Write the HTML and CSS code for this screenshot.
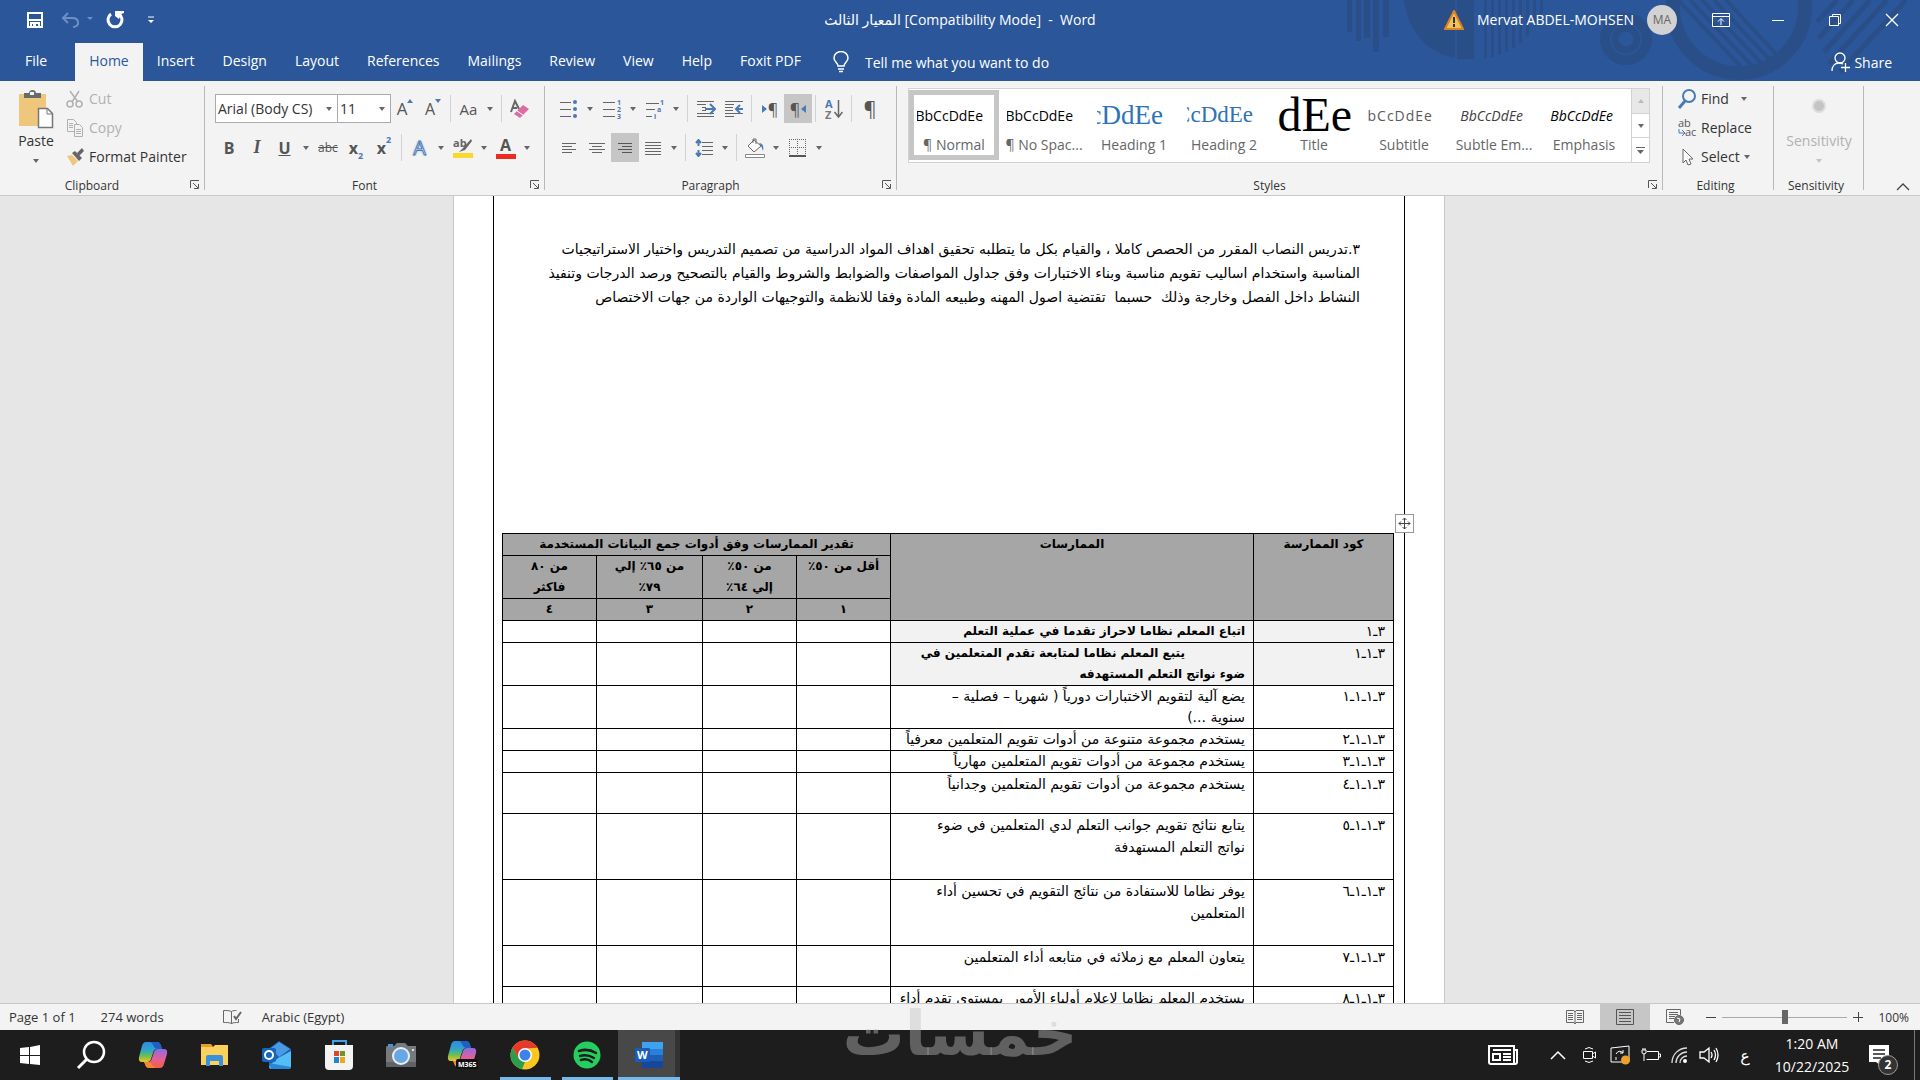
FILE: index.html
```html
<!DOCTYPE html>
<html lang="en">
<head>
  <meta charset="UTF-8" />
  <meta name="viewport" content="width=device-width, initial-scale=1.0"/>
  <title>المعيار الثالث [Compatibility Mode] - Word</title>
  <link rel="stylesheet" href="styles.css">
</head>
<body>

<header class="top">
  <svg class="top-art" width="580" height="81" viewBox="0 0 580 81" aria-hidden="true">
    <g fill="#2a4f88">
      <path d="M7 0h5v32h-5zM16 0h5v41h-5zM24 0h6v38h-6zM33 0h6v52h-6zM43 0h6v37h-6z"/>
      <path d="M64 0h51v58C85 52 68 30 64 0z"/>
      <path d="M117 0h17v59h-17zM144 0h3v58h-3zM151 0h3v57h-3zM158 0h3v55h-3zM165 0h3v52h-3zM172 0h3v48h-3zM179 0h3v43h-3zM186 0h3v36h-3zM193 0h3v26h-3zM200 0h3v14h-3z"/>
    </g>
    <g fill="none" stroke="#2a4f88">
      <circle cx="286" cy="39" r="21" stroke-width="10"/>
      <circle cx="286" cy="39" r="11" stroke-width="7"/>
      <circle cx="399" cy="7" r="66" stroke-width="14"/>
      <path stroke-width="4" d="M338 0l66 70M350 0l64 68M362 0l60 64M374 0l56 60M386 0l50 54"/>
      <path stroke-width="5" d="M497 0l-20 22M513 0l-34 38M530 0l-46 52M547 0l-58 64M566 0l-66 72"/>
    </g>
  </svg>
  <div class="titlebar">
    <div class="quick">
      <button class="q-save" aria-label="Save"><svg width="18" height="18" viewBox="0 0 18 18"><path d="M2 2h14v14H2z" fill="none" stroke="#fff" stroke-width="2"/><path d="M2 9h14M5 16v-4h8v4" fill="none" stroke="#fff" stroke-width="2"/><path d="M7 13h3v3H7z" fill="#fff"/></svg></button>
      <button class="q-undo" aria-label="Undo"><svg width="32" height="18" viewBox="0 0 32 18"><path d="M7 2L2 7l5 5M2 7h9c8 0 8 9 1 9" fill="none" stroke="#6d8fc4" stroke-width="2"/><path d="M26 6h6l-3 3z" fill="#6d8fc4"/></svg></button>
      <button class="q-redo" aria-label="Repeat"><svg width="20" height="20" viewBox="0 0 20 20"><path d="M6 4a7 7 0 1 0 8 0" fill="none" stroke="#fff" stroke-width="3"/><path d="M10 1h9v2l-3 1-2 5-4-3z" fill="#fff"/></svg></button>
      <button class="q-more" aria-label="Customize"><svg width="8" height="8" viewBox="0 0 8 8"><path d="M1 1h6" stroke="#fff"/><path d="M1 4h6L4 7z" fill="#fff"/></svg></button>
    </div>
    <h1 class="doc-title">المعيار الثالث [Compatibility Mode]&nbsp; -&nbsp; Word</h1>
    <div class="account">
      <svg width="20" height="20" viewBox="0 0 20 20"><path d="M10 1l9 18H1z" fill="#f3c15c" stroke="#d98324" stroke-width="2"/><path d="M10 7v6M10 14v3" stroke="#333" stroke-width="2"/></svg>
      <span>Mervat ABDEL-MOHSEN</span>
      <span class="avatar">MA</span>
    </div>
    <div class="window-buttons">
      <button aria-label="Ribbon display options"><svg width="18" height="14" viewBox="0 0 18 14" fill="none" stroke="#fff"><path d="M.5.5h17v13H.5zM.5 3.500h17M9 12V6M6 8.500l3-3 3 3"/></svg></button>
      <button aria-label="Minimize"><svg width="14" height="14" viewBox="0 0 14 14"><path d="M1 7.500h12" stroke="#fff"/></svg></button>
      <button aria-label="Restore"><svg width="14" height="14" viewBox="0 0 14 14" fill="none" stroke="#fff"><path d="M1.500 3.500h9v9h-9zM4.500 3V1.500h8v9H11"/></svg></button>
      <button aria-label="Close"><svg width="14" height="14" viewBox="0 0 14 14"><path d="M1 1l12 12M13 1L1 13" stroke="#fff" stroke-width="1.300"/></svg></button>
    </div>
  </div>
  <nav class="tabs">
    <a class="tab file" href="#file">File</a>
    <a class="tab active" href="#home">Home</a>
    <a class="tab" href="#insert">Insert</a>
    <a class="tab" href="#design">Design</a>
    <a class="tab" href="#layout">Layout</a>
    <a class="tab" href="#references">References</a>
    <a class="tab" href="#mailings">Mailings</a>
    <a class="tab" href="#review">Review</a>
    <a class="tab" href="#view">View</a>
    <a class="tab" href="#help">Help</a>
    <a class="tab" href="#foxit">Foxit PDF</a>
    <button class="tell">
      <svg width="16" height="22" viewBox="0 0 16 22" fill="none" stroke="#fff" stroke-width="1.500"><path d="M5 15c0-3-4-4-4-8a7 6.500 0 0 1 14 0c0 4-4 5-4 8zM5 18h6M6 20.500h4"/></svg>
      <span>Tell me what you want to do</span>
    </button>
    <button class="share">
      <svg width="20" height="20" viewBox="0 0 20 20" fill="none" stroke="#fff" stroke-width="1.300"><circle cx="9" cy="6" r="5"/><path d="M1 19c0-5 3-8 7-8 2 0 3 .5 4 1M10 15.500h9M14.500 11v9"/></svg>
      <span>Share</span>
    </button>
  </nav>
</header>

<div class="ribbon">
  <section class="group clipboard">
    <div class="group-body">
      <button class="big paste">
        <svg width="36" height="40" viewBox="0 0 36 40"><path d="M1 5h27v32H1z" fill="#efc77c"/><path d="M6 9V4h5c0-4 7-4 7 0h5v5z" fill="#6a6a6a"/><path d="M12 3h4v3h-4z" fill="#f3f3f3"/><path d="M20.500 19.500h9l5 5v14h-14z" fill="#fff" stroke="#777" stroke-width="1.500"/><path d="M29 20v5h5" fill="none" stroke="#777"/></svg>
        <span>Paste</span>
        <i class="arrow"></i>
      </button>
      <div class="side">
        <button class="line off"><svg width="18" height="18" viewBox="0 0 18 18" fill="none" stroke="#b0b0b0" stroke-width="1.500"><path d="M4 1l8 11M13 1L6 12"/><circle cx="4" cy="14" r="3"/><circle cx="13" cy="14" r="3"/></svg>Cut</button>
        <button class="line off"><svg width="18" height="18" viewBox="0 0 18 18" fill="#f3f3f3" stroke="#b0b0b0"><path d="M1.500.5h6l3 3v9h-9zM3 4.500h4M3 6.500h4M3 8.500h4"/><path d="M8.500 5.500h5l3 3v9h-8zM10 10.500h5M10 12.500h5M10 14.500h5"/></svg>Copy</button>
        <button class="line"><svg width="18" height="18" viewBox="0 0 18 18"><path d="M1 8l5-1 6 6-5 5z" fill="#efc77c"/><path d="M6 5l3-2 7 7-3 3z" fill="#666"/><path d="M11 5l5-5 2 3-5 5z" fill="#666"/></svg>Format Painter</button>
      </div>
    </div>
    <div class="group-label"><span>Clipboard</span><button class="launch" aria-label="Clipboard options"><svg width="10" height="10" viewBox="0 0 10 10" fill="none" stroke="#555"><path d="M.5 8V.5H9M3 3l5 5M8.500 4v4.500H4"/></svg></button></div>
  </section>

  <section class="group font">
    <div class="group-body rows">
      <div class="row">
        <label class="combo name"><select aria-label="Font"><option>Arial (Body CS)</option></select><i class="arrow"></i></label>
        <label class="combo size"><select aria-label="Font size"><option>11</option></select><i class="arrow"></i></label>
        <button class="tool letter">A<svg class="mark" width="6" height="4"><path d="M0 4l3-4 3 4z" fill="#4a7ab5"/></svg></button>
        <button class="tool letter small">A<svg class="mark" width="6" height="4"><path d="M0 0h6L3 4z" fill="#4a7ab5"/></svg></button>
        <i class="sep"></i>
        <button class="tool drop grey"><span>Aa</span><i class="arrow"></i></button>
        <i class="sep"></i>
        <button class="tool" aria-label="Clear formatting"><svg width="20" height="20" viewBox="0 0 20 20"><path d="M1 13L5 2l4 8M2 9h5" fill="none" stroke="#666" stroke-width="2"/><path d="M4 15l9-9 6 4-9 9z" fill="#de6ba4"/><path d="M7 12l6 4" stroke="#fff"/></svg></button>
      </div>
      <div class="row">
        <button class="tool bold">B</button>
        <button class="tool italic">I</button>
        <button class="tool drop bold"><span class="under">U</span><i class="arrow"></i></button>
        <button class="tool strike">abc</button>
        <button class="tool bold">x<sub>2</sub></button>
        <button class="tool bold">x<sup>2</sup></button>
        <i class="sep"></i>
        <button class="tool drop effect"><span>A</span><i class="arrow"></i></button>
        <button class="tool drop" aria-label="Highlight"><svg width="20" height="22" viewBox="0 0 20 22"><text x="0" y="10" class="ab">ab</text><path d="M18 2l-7 8-5 5 6-2 7-9z" fill="#666"/><path d="M0 16h20v5H0z" fill="#fbd72b"/></svg><i class="arrow"></i></button>
        <button class="tool drop fontcolor"><span>A</span><i class="arrow"></i></button>
      </div>
    </div>
    <div class="group-label"><span>Font</span><button class="launch" aria-label="Font options"><svg width="10" height="10" viewBox="0 0 10 10" fill="none" stroke="#555"><path d="M.5 8V.5H9M3 3l5 5M8.500 4v4.500H4"/></svg></button></div>
  </section>

  <section class="group paragraph">
    <div class="group-body rows">
      <div class="row">
        <button class="tool drop" aria-label="Bullets"><svg width="18" height="20" viewBox="0 0 18 20"><path d="M0 3.500h11M0 10.500h11M0 17.500h11" stroke="#666"/><g fill="#4a7ab5"><circle cx="15" cy="3" r="2"/><circle cx="15" cy="10" r="2"/><circle cx="15" cy="17" r="2"/></g></svg><i class="arrow"></i></button>
        <button class="tool drop" aria-label="Numbering"><svg width="18" height="20" viewBox="0 0 18 20"><path d="M0 3.500h12M0 10.500h12M0 17.500h12" stroke="#666"/><g class="num"><text x="14" y="6">1</text><text x="14" y="13">2</text><text x="14" y="20">3</text></g></svg><i class="arrow"></i></button>
        <button class="tool drop" aria-label="Multilevel list"><svg width="18" height="20" viewBox="0 0 18 20"><path d="M0 4.500h13M0 10.500h9M0 17.500h6" stroke="#666"/><g class="num"><text x="14" y="6">1</text><text x="11" y="13">a</text><text x="8" y="20">i</text></g></svg><i class="arrow"></i></button>
        <i class="sep"></i>
        <button class="tool" aria-label="Decrease indent"><svg width="19" height="18" viewBox="0 0 19 18"><path d="M0 1.500h17M0 4.500h9M5 7.500h4M5 10.500h4M0 13.500h17M0 16.500h17" stroke="#666"/><path d="M8 9h9M13 4l5 5-5 5" fill="none" stroke="#4a7ab5" stroke-width="2"/></svg></button>
        <button class="tool" aria-label="Increase indent"><svg width="19" height="18" viewBox="0 0 19 18"><path d="M0 1.500h18M0 4.500h9M0 7.500h8M0 10.500h8M0 13.500h18M0 16.500h9" stroke="#666"/><path d="M18 9h-7M15 5l-4 4 4 4" fill="none" stroke="#4a7ab5" stroke-width="2"/></svg></button>
        <i class="sep"></i>
        <button class="tool pil"><svg width="5" height="8"><path d="M0 0l5 4-5 4z" fill="#4a7ab5"/></svg>¶</button>
        <button class="tool pil on">¶<svg width="5" height="8"><path d="M5 0L0 4l5 4z" fill="#4a7ab5"/></svg></button>
        <i class="sep"></i>
        <button class="tool" aria-label="Sort"><svg width="18" height="20" viewBox="0 0 18 20"><text x="0" y="9" class="sa">A</text><text x="0" y="20" class="sz">Z</text><path d="M13.500 1v16M9.500 13l4 5 4-5" fill="none" stroke="#666" stroke-width="1.500"/></svg></button>
        <i class="sep"></i>
        <button class="tool pil large">¶</button>
      </div>
      <div class="row">
        <button class="tool" aria-label="Align left"><svg width="16" height="14"><path d="M1 2.500h14M1 5.500h10M1 8.500h14M1 11.500h10" stroke="#666"/></svg></button>
        <button class="tool" aria-label="Center"><svg width="16" height="14"><path d="M0 2.500h16M3 5.500h10M0 8.500h16M3 11.500h10" stroke="#666"/></svg></button>
        <button class="tool on" aria-label="Align right"><svg width="16" height="14"><path d="M1 2.500h14M5 5.500h10M1 8.500h14M5 11.500h10" stroke="#555"/></svg></button>
        <button class="tool drop" aria-label="Justify"><svg width="16" height="14"><path d="M0 1.500h16M0 4.500h16M0 7.500h16M0 10.500h16M0 13.500h16" stroke="#666"/></svg><i class="arrow"></i></button>
        <i class="sep"></i>
        <button class="tool drop" aria-label="Line spacing"><svg width="18" height="18" viewBox="0 0 18 18"><path d="M7 3.500h11M7 7.500h11M7 11.500h11M7 15.500h11" stroke="#666"/><path d="M3.500 2v5M3.500 11v5M1 4l2.500-3L6 4M1 14l2.500 3L6 14" fill="none" stroke="#4a7ab5" stroke-width="2"/></svg><i class="arrow"></i></button>
        <i class="sep"></i>
        <button class="tool drop" aria-label="Shading"><svg width="20" height="20" viewBox="0 0 20 20"><path d="M9 2l7 6-7 6-6-6zM8 5V1h3v5" fill="#fff" stroke="#666"/><path d="M14 5c4 0 5 4 4 8-1-3-1-4-4-8z" fill="#4a7ab5"/><path d="M.5 16.500h19v3H.5z" fill="#fff" stroke="#888"/></svg><i class="arrow"></i></button>
        <button class="tool drop" aria-label="Borders"><svg width="17" height="18" viewBox="0 0 17 18"><path d="M.5 0v17M8.500 0v17M16.500 0v17M0 .5h17M0 8.500h17" stroke="#666" stroke-dasharray="1 1"/><path d="M0 17h17" stroke="#555" stroke-width="2"/></svg><i class="arrow"></i></button>
      </div>
    </div>
    <div class="group-label"><span>Paragraph</span><button class="launch" aria-label="Paragraph options"><svg width="10" height="10" viewBox="0 0 10 10" fill="none" stroke="#555"><path d="M.5 8V.5H9M3 3l5 5M8.500 4v4.500H4"/></svg></button></div>
  </section>

  <section class="group styles">
    <div class="group-body">
      <div class="gallery">
        <div class="items">
          <button class="style selected"><span class="preview">BbCcDdEe</span><span class="caption">¶ Normal</span></button>
          <button class="style"><span class="preview">BbCcDdEe</span><span class="caption">¶ No Spac...</span></button>
          <button class="style"><span class="preview h1">cDdEe</span><span class="caption">Heading 1</span></button>
          <button class="style"><span class="preview h2">CcDdEe</span><span class="caption">Heading 2</span></button>
          <button class="style"><span class="preview big-title">dEe</span><span class="caption">Title</span></button>
          <button class="style"><span class="preview subtitle">bCcDdEe</span><span class="caption">Subtitle</span></button>
          <button class="style"><span class="preview subtle">BbCcDdEe</span><span class="caption">Subtle Em...</span></button>
          <button class="style"><span class="preview emphasis">BbCcDdEe</span><span class="caption">Emphasis</span></button>
        </div>
        <div class="scroll">
          <button class="off" aria-label="Previous styles"><svg width="6" height="4"><path d="M0 4l3-4 3 4z" fill="#bbb"/></svg></button>
          <button aria-label="Next styles"><i class="arrow"></i></button>
          <button aria-label="More styles"><svg width="9" height="9"><path d="M0 1.500h9" stroke="#666"/><path d="M1 4h7L4.500 8z" fill="#666"/></svg></button>
        </div>
      </div>
    </div>
    <div class="group-label"><span>Styles</span><button class="launch" aria-label="Style options"><svg width="10" height="10" viewBox="0 0 10 10" fill="none" stroke="#555"><path d="M.5 8V.5H9M3 3l5 5M8.500 4v4.500H4"/></svg></button></div>
  </section>

  <section class="group editing">
    <div class="group-body">
      <div class="side">
        <button class="line"><svg width="20" height="20" viewBox="0 0 20 20" fill="none" stroke="#4a7ab5"><circle cx="12" cy="7" r="6" stroke-width="2"/><path d="M8 12l-6 7" stroke-width="3"/></svg>Find<i class="arrow wide"></i></button>
        <button class="line"><svg width="20" height="20" viewBox="0 0 20 20"><text x="1" y="9" class="ra">ab</text><text x="8" y="18" class="ra">ac</text><path d="M2 11v4h5M5 12l3 3-3 3" fill="none" stroke="#4a7ab5"/></svg>Replace</button>
        <button class="line"><svg width="20" height="20" viewBox="0 0 20 20"><path d="M6 2v14l3-3 2 5 3-1-2-5h4z" fill="#fff" stroke="#666"/></svg>Select<i class="arrow"></i></button>
      </div>
    </div>
    <div class="group-label"><span>Editing</span></div>
  </section>

  <section class="group sensitivity">
    <div class="group-body">
      <button class="big off" disabled>
        <svg width="36" height="40" viewBox="0 0 36 40"><circle cx="18" cy="17" r="7" fill="#dcdcdc"/><circle cx="18" cy="17" r="5" fill="#c4c4c4"/></svg>
        <span>Sensitivity</span>
        <i class="arrow"></i>
      </button>
    </div>
    <div class="group-label"><span>Sensitivity</span></div>
  </section>
  <button class="collapse" aria-label="Collapse the ribbon"><svg width="14" height="8"><path d="M1 7l6-6 6 6" fill="none" stroke="#444" stroke-width="1.300"/></svg></button>
</div>

<main class="workspace">
  <article class="page" lang="ar" dir="rtl">
    <div class="frame">
      <p class="intro">٣.تدريس النصاب المقرر من الحصص كاملا ، والقيام بكل ما يتطلبه تحقيق اهداف المواد الدراسية من تصميم التدريس واختيار الاستراتيجيات<br>
      المناسبة واستخدام اساليب تقويم مناسبة وبناء الاختبارات وفق جداول المواصفات والضوابط والشروط والقيام بالتصحيح ورصد الدرجات وتنفيذ<br>
      النشاط داخل الفصل وخارجة وذلك&nbsp; حسبما&nbsp; تقتضية اصول المهنه وطبيعه المادة وفقا للانظمة والتوجيهات الواردة من جهات الاختصاص</p>

      <div class="table-wrap">
        <button class="move" aria-label="Move table"><svg width="13" height="13" viewBox="0 0 13 13" fill="none" stroke="#444"><path d="M6.500 1v11M1 6.500h11M4.500 3l2-2 2 2M4.500 10l2 2 2-2M3 4.500l-2 2 2 2M10 4.500l2 2-2 2"/></svg></button>
        <table>
          <colgroup>
            <col class="c-code"><col class="c-practice"><col class="c-mark"><col class="c-mark"><col class="c-mark3"><col class="c-mark">
          </colgroup>
          <thead>
            <tr>
              <th rowspan="3">كود الممارسة</th>
              <th rowspan="3">الممارسات</th>
              <th colspan="4">تقدير الممارسات وفق أدوات جمع البيانات المستخدمة</th>
            </tr>
            <tr><th>أقل من ٥٠٪</th><th>من ٥٠٪<br>إلي ٦٤٪</th><th>من ٦٥٪ إلي<br>٧٩٪</th><th>من ٨٠<br>فاكثر</th></tr>
            <tr><th>١</th><th>٢</th><th>٣</th><th>٤</th></tr>
          </thead>
          <tbody>
            <tr class="main"><td>٣ـ١</td><td>اتباع المعلم نظاما لاحراز تقدما في عملية التعلم</td><td></td><td></td><td></td><td></td></tr>
            <tr class="main"><td>٣ـ١ـ١</td><td><span class="indent">يتبع المعلم نظاما لمتابعة تقدم المتعلمين في</span><br>ضوء نواتج التعلم المستهدفه</td><td></td><td></td><td></td><td></td></tr>
            <tr><td>٣ـ١ـ١ـ١</td><td>يضع آلية لتقويم الاختبارات دورياً ( شهريا – فصلية –<br>سنوية ...)</td><td></td><td></td><td></td><td></td></tr>
            <tr><td>٣ـ١ـ١ـ٢</td><td>يستخدم مجموعة متنوعة من أدوات تقويم المتعلمين معرفياً</td><td></td><td></td><td></td><td></td></tr>
            <tr><td>٣ـ١ـ١ـ٣</td><td>يستخدم مجموعة من أدوات تقويم المتعلمين مهارياً</td><td></td><td></td><td></td><td></td></tr>
            <tr class="loose short"><td>٣ـ١ـ١ـ٤</td><td>يستخدم مجموعة من أدوات تقويم المتعلمين وجدانياً</td><td></td><td></td><td></td><td></td></tr>
            <tr class="loose"><td>٣ـ١ـ١ـ٥</td><td>يتابع نتائج تقويم جوانب التعلم لدي المتعلمين في ضوء<br>نواتج التعلم المستهدفة</td><td></td><td></td><td></td><td></td></tr>
            <tr class="loose"><td>٣ـ١ـ١ـ٦</td><td>يوفر نظاما للاستفادة من نتائج التقويم في تحسين أداء<br>المتعلمين</td><td></td><td></td><td></td><td></td></tr>
            <tr class="loose short"><td>٣ـ١ـ١ـ٧</td><td>يتعاون المعلم مع زملائه في متابعه أداء المتعلمين</td><td></td><td></td><td></td><td></td></tr>
            <tr class="loose short"><td>٣ـ١ـ١ـ٨</td><td>يستخدم المعلم نظاما لإعلام أولياء الأمور&nbsp; بمستوى تقدم أداء</td><td></td><td></td><td></td><td></td></tr>
          </tbody>
        </table>
      </div>
    </div>
  </article>
</main>

<div class="statusbar">
  <span>Page 1 of 1</span>
  <span>274 words</span>
  <button class="proof" aria-label="Proofing"><svg width="20" height="16" viewBox="0 0 20 16" fill="none" stroke="#666"><path d="M9.500 2.500c-2-1-5-1-8-1v12c3 0 6 0 8 1zM9.500 2.500c1-1 4-1 5-1M9.500 14.500c2-1 4-1 7-1V10"/><path d="M12 7l2 3 5-7" stroke-width="2"/></svg></button>
  <span>Arabic (Egypt)</span>
  <div class="views">
    <button aria-label="Read mode"><svg width="18" height="16" viewBox="0 0 18 16" fill="none" stroke="#666"><path d="M.5 1.500H8L9 3l1-1.500h7.500v12H10L9 15l-1-1.500H.5zM9 3v12M2 4.500h5M2 6.500h5M2 8.500h5M2 10.500h5M11 4.500h5M11 6.500h5M11 8.500h5M11 10.500h5"/></svg></button>
    <button class="on" aria-label="Print layout"><svg width="18" height="16" viewBox="0 0 18 16" fill="none" stroke="#555"><path d="M.5.5h17v15H.5zM3 3.500h12M3 6.500h12M3 9.500h12M3 12.500h12"/></svg></button>
    <button aria-label="Web layout"><svg width="18" height="16" viewBox="0 0 18 16" fill="none" stroke="#666"><path d="M8 13.500H.5V.5h14V6M3 3.500h9M3 5.500h9M3 7.500h6M3 9.500h5"/><circle cx="13" cy="11" r="4.500" fill="#777"/><path d="M11 9l3 1-1 3" stroke="#fff"/></svg></button>
  </div>
  <button class="zoom-btn" aria-label="Zoom out"><svg width="10" height="10"><path d="M0 5.500h10" stroke="#444"/></svg></button>
  <input class="zoom" type="range" min="0" max="100" value="50" aria-label="Zoom">
  <button class="zoom-btn" aria-label="Zoom in"><svg width="10" height="10"><path d="M0 5.500h10M5.500 0v10" stroke="#444"/></svg></button>
  <span class="percent">100%</span>
</div>

<footer class="taskbar">
  <button class="app start" aria-label="Start"><svg width="20" height="20" viewBox="0 0 20 20" fill="#fff"><path d="M0 3l9-1v8H0zM10 2l10-2v10H10zM0 11h9v8l-9-1zM10 11h10v9l-10-1z"/></svg></button>
  <button class="app" aria-label="Search"><svg width="30" height="30" viewBox="0 0 30 30" fill="none" stroke="#fff"><circle cx="18" cy="12" r="10" stroke-width="2.500"/><path d="M11 19l-9 9" stroke-width="3"/></svg></button>
  <button class="app" aria-label="Copilot"><svg width="30" height="28" viewBox="0 0 30 28"><use href="#copilot"/></svg></button>
  <button class="app" aria-label="File Explorer"><svg width="30" height="26" viewBox="0 0 30 26"><path d="M1 2h10l3 4H1z" fill="#e79b2d"/><path d="M1 5h12l2-2h13v20H1z" fill="#fbd05b"/><path d="M6 24V15q0-2 2-2h13q2 0 2 2v9h-4v-5h-9v5z" fill="#3991db"/></svg></button>
  <button class="app" aria-label="Outlook"><svg width="32" height="30" viewBox="0 0 32 30"><path d="M6 10L18 1l12 8v19H9z" fill="#1b62b4"/><path d="M10 8l8-6 11 7-11 8z" fill="#4a9ae4"/><path d="M30 11v15q0 3-3 3H10q-2 0-2-3l9-8z" fill="#55bdf5"/><path d="M8 23l22 4-1 2H10z" fill="#2b86d9"/><rect x="1" y="8" width="14" height="14" rx="2" fill="#1266bd"/><circle cx="8" cy="15" r="4" fill="none" stroke="#fff" stroke-width="2"/></svg></button>
  <button class="app" aria-label="Microsoft Store"><svg width="30" height="30" viewBox="0 0 30 30"><path d="M9 6V1h13v5" fill="none" stroke="#3fa0e6" stroke-width="2"/><path d="M1 5h28v21q0 4-4 4H5q-4 0-4-4z" fill="#f3f3f3"/><path d="M10 11h5v5h-5z" fill="#e0442a"/><path d="M16 11h5v5h-5z" fill="#75912c"/><path d="M10 17h5v6h-5z" fill="#2583ca"/><path d="M16 17h5v6h-5z" fill="#efa51d"/></svg></button>
  <button class="app" aria-label="Camera"><svg width="32" height="26" viewBox="0 0 32 26"><path d="M2 4h7l3-3h8l3 3h8v21H1V5z" fill="#777b80"/><path d="M3 2h5v3H3z" fill="#3f97dc"/><path d="M1 20h30v5H1z" fill="#5f6368"/><circle cx="16" cy="14" r="9" fill="#e8eef4"/><circle cx="16" cy="14" r="7" fill="#67a7e4"/><circle cx="28" cy="8" r="1" fill="#fff"/></svg></button>
  <button class="app" aria-label="Microsoft 365 Copilot"><svg width="32" height="30" viewBox="0 0 32 30"><defs><linearGradient id="cl" x2="0" y2="1"><stop offset="0" stop-color="#2a8ce8"/><stop offset=".45" stop-color="#35a7c0"/><stop offset=".7" stop-color="#6cc04a"/><stop offset="1" stop-color="#f3c22e"/></linearGradient><linearGradient id="cr" x2="0" y2="1"><stop offset="0" stop-color="#8a6de0"/><stop offset=".5" stop-color="#e0609f"/><stop offset="1" stop-color="#f2603e"/></linearGradient><g id="copilot"><path d="M8 1h11q3 0 4 4l1 3h-5q-3 0-4 4l-2 6q-1 3-4 3H4q-4 0-3-5L4 5q1-4 4-4z" fill="url(#cl)"/><path d="M12 1h7q3 0 4 4l1 3h-5q-3-1-4-4-1-3-3-3z" fill="#1e5fc4"/><path d="M22 27H11q-3 0-4-4l-1-2h4q3 0 4-4l2-6q1-3 4-3h6q4 0 3 5l-3 10q-1 4-4 4z" fill="url(#cr)"/><path d="M18 27h-7q-3 0-4-4l-1-2h4q3 0 4 3 2 3 4 3z" fill="#f08a32"/></g></defs><use href="#copilot"/><rect x="9" y="19" width="22" height="10" rx="2" fill="#111"/><text x="11" y="27" class="m365">M365</text></svg></button>
  <button class="app open" aria-label="Chrome"><svg width="30" height="30" viewBox="0 0 30 30"><circle cx="15" cy="15" r="14.500" fill="#fbc622"/><path d="M2.500 7.800A14.500 14.500 0 0 1 27.600 7.800L15 8.500 9 19z" fill="#e8372c"/><path d="M2.500 7.800L9 18.500l6 3.500-3 7.200A14.500 14.500 0 0 1 2.500 7.800z" fill="#2c9d4b"/><circle cx="15" cy="15" r="7" fill="#fff"/><circle cx="15" cy="15" r="5.500" fill="#3d83ea"/></svg></button>
  <button class="app open" aria-label="Spotify"><svg width="28" height="28" viewBox="0 0 28 28"><circle cx="14" cy="14" r="13.500" fill="#24cf5f"/><path d="M6 10q9-3 17 2M7 15q7-2 14 2M8 19q6-2 11 2" fill="none" stroke="#1c1c1c" stroke-width="2.500" stroke-linecap="round"/></svg></button>
  <button class="app open current" aria-label="Word"><svg width="30" height="28" viewBox="0 0 30 28"><path d="M8 1h21v7H8z" fill="#3fa2ee"/><path d="M8 8h21v6H8z" fill="#2a7fd6"/><path d="M8 14h21v6H8z" fill="#1c5fb5"/><path d="M8 20h21v7H8z" fill="#17479b"/><rect x="1" y="7" width="15" height="14" rx="1" fill="#1a5cbc"/><text x="3" y="18" class="w">W</text></svg></button>

  <div class="tray">
    <button class="news" aria-label="News"><svg width="30" height="20" viewBox="0 0 30 20" fill="none" stroke="#fff" stroke-width="2"><path d="M1 1h25v18H3q-2 0-2-2zM26 5h3v12q0 2-2 2h-3M5 9h7v6H5zM5 5h18M15 9h8M15 12h8M15 15h8"/></svg></button>
    <button class="more" aria-label="Hidden icons"><svg width="16" height="10"><path d="M1 9l7-7 7 7" fill="none" stroke="#fff" stroke-width="1.500"/></svg></button>
    <button aria-label="Meet now"><svg width="16" height="18" viewBox="0 0 16 18" fill="none" stroke="#fff"><path d="M1.500 5.500h9v7h-9zM10.500 8l3-2v6l-3-2M3 3q4-3 8 0M3 15q4 3 8 0"/></svg></button>
    <button class="wide" aria-label="Updates"><svg width="20" height="20" viewBox="0 0 20 20" fill="none" stroke="#fff"><path d="M1 3l18-2v16H1z"/><path d="M6 9q3-5 7-1M13 5v3h-3M6 12v3"/><circle cx="15.500" cy="15" r="4.500" fill="#eea02e" stroke="none"/></svg></button>
    <button class="wide" aria-label="Battery"><svg width="20" height="14" viewBox="0 0 20 14" fill="none" stroke="#fff"><path d="M6 3.500h11.500v8H5.500M18 6h1.500v3H18M1 2v3q2 2 4 0V2zM3 6v7M2 0v2M4 0v2"/></svg></button>
    <button aria-label="Network"><svg width="18" height="18" viewBox="0 0 18 18" fill="none" stroke="#ddd" stroke-width="1.300"><path d="M1 17C1 8 8 2 16 2M5 17c0-6 5-11 11-11M9 17c0-4 3-7 7-7"/><circle cx="14" cy="15" r="2" fill="#fff" stroke="none"/></svg></button>
    <button class="wide" aria-label="Volume"><svg width="21" height="18" viewBox="0 0 21 18" fill="none" stroke="#fff" stroke-width="1.300"><path d="M1 6h4l5-4v14l-5-4H1zM12 6q2 3 0 6M15 4q3 5 0 10M17 2q4 7 0 14"/></svg></button>
    <button class="lang">ع</button>
    <div class="clock"><span>1:20 AM</span><span>10/22/2025</span></div>
    <button class="notify" aria-label="Notifications"><svg width="20" height="20" viewBox="0 0 20 20"><path d="M0 0h20v17h-9v3l-4-3H0z" fill="#fff"/><path d="M4 5h12M4 9h12M4 13h8" stroke="#222" stroke-width="1.500"/></svg><span class="badge">2</span></button>
    <i class="edge"></i>
  </div>
</footer>

<div class="watermark" lang="ar">خمسات</div>

</body>
</html>
```
FILE: styles.css
```css
* {
  box-sizing: border-box;
}
body {
  margin: 0;
  height: 100vh;
  display: flex;
  flex-direction: column;
  overflow: hidden;
  font-family: "Open Sans", "DejaVu Sans", sans-serif;
  font-size: 14px;
  color: #333;
  background: #e6e6e6;
}
button {
  font: inherit;
  color: inherit;
  background: none;
  border: none;
  padding: 0;
  display: flex;
  align-items: center;
  justify-content: center;
}
svg {
  display: block;
  flex: none;
}
.arrow {
  flex: none;
  width: 0;
  border: 3px solid transparent;
  border-top: 4px solid #666;
  border-bottom: none;
}

/* title bar and tabs */
.top {
  position: relative;
  background: #2b579a;
  color: #fff;
}
.top-art {
  position: absolute;
  top: 0;
  right: 0;
}
.titlebar {
  position: relative;
  display: grid;
  grid-template-columns: 1fr auto 1fr auto;
  align-items: center;
  height: 43px;
  padding-bottom: 4px;
}
.quick {
  display: flex;
  align-items: center;
  padding-left: 26px;
}
.q-undo {
  margin-left: 17px;
}
.q-redo {
  margin-left: 12px;
}
.q-more {
  margin-left: 22px;
}
.doc-title {
  margin: 0;
  font-size: 14px;
  font-weight: normal;
  padding-left: 228px;
}
.account {
  display: flex;
  justify-content: flex-end;
  align-items: center;
  gap: 13px;
  padding-right: 15px;
}
.avatar {
  width: 30px;
  height: 30px;
  line-height: 30px;
  border-radius: 50%;
  background: #d2d2d2;
  color: #666;
  font-size: 12px;
  text-align: center;
}
.window-buttons {
  display: flex;
}
.window-buttons button {
  width: 57px;
  height: 36px;
}
.tabs {
  position: relative;
  display: flex;
  height: 38px;
}
.tab {
  padding: 0 14px;
  line-height: 36px;
  color: #fff;
  text-decoration: none;
}
.tab.file {
  padding: 0 28px 0 25px;
}
.tab.active {
  background: #f3f3f3;
  color: #2b579a;
}
.tell {
  gap: 16px;
  margin-left: 18px;
}
.share {
  gap: 3px;
  margin-left: auto;
  padding-right: 28px;
}

/* ribbon */
.ribbon {
  display: flex;
  flex: none;
  height: 115px;
  background: #f3f3f3;
  border-bottom: 1px solid #c8c8c8;
}
.group {
  position: relative;
  display: flex;
  flex-direction: column;
}
.group::after {
  content: "";
  position: absolute;
  right: 0;
  top: 5px;
  bottom: 5px;
  border-right: 1px solid #b8b8b8;
}
.group-body {
  flex: 1;
  display: flex;
}
.group-label {
  display: flex;
  align-items: center;
  height: 20px;
  font-size: 12px;
}
.group-label span {
  flex: 1;
  text-align: center;
  padding-right: 6px;
}
.launch {
  margin-right: 5px;
}
.clipboard {
  width: 205px;
}
.font {
  width: 340px;
}
.paragraph {
  width: 352px;
}
.styles {
  flex: 1;
  min-width: 0;
}
.editing {
  width: 111px;
}
.sensitivity {
  width: 90px;
}
.collapse {
  width: 56px;
  align-items: flex-end;
  justify-content: flex-end;
  padding: 0 10px 4px 0;
}
.big {
  flex-direction: column;
  justify-content: flex-start;
  padding-top: 8px;
}
.big span {
  line-height: 24px;
}
.big .arrow {
  margin-top: 6px;
}
.paste {
  width: 56px;
  margin-left: 8px;
}
.sensitivity .big {
  width: 100%;
}
.off {
  color: #b1b1b1;
}
.off .arrow {
  border-top-color: #c4c4c4;
}
.side {
  display: flex;
  flex-direction: column;
  padding-top: 3px;
}
.line {
  height: 29px;
  gap: 5px;
  justify-content: flex-start;
}
.line svg {
  margin-left: 2px;
}
.line .wide {
  margin-left: 8px;
}
.editing .side {
  padding-left: 12px;
}
.editing .line {
  gap: 4px;
}
.rows {
  flex-direction: column;
  gap: 10px;
  padding: 13px 0 0 10px;
}
.row {
  display: flex;
  align-items: center;
  height: 29px;
}
.combo {
  position: relative;
  display: flex;
  align-items: center;
  height: 29px;
}
.combo select {
  appearance: none;
  width: 100%;
  height: 100%;
  border: 1px solid #ababab;
  border-radius: 0;
  background: #fff;
  padding: 0 2px;
  font: inherit;
  color: #333;
}
.combo .arrow {
  position: absolute;
  right: 6px;
}
.combo.name {
  width: 123px;
}
.combo.size {
  width: 54px;
  margin-left: -1px;
}
.tool {
  width: 28px;
  height: 29px;
  flex: none;
  font-size: 16px;
  color: #555;
}
.tool.drop {
  width: 43px;
  display: grid;
  grid-template-columns: 27px 16px;
  justify-items: center;
}
.tool.on {
  background: #c6c6c6;
}
.sep {
  flex: none;
  width: 1px;
  height: 27px;
  margin: 0 4px 0 3px;
  background: #d2d2d2;
}
.grey {
  font-size: 15px;
}
.letter {
  font-size: 17px;
}
.letter.small {
  font-size: 16px;
}
.mark {
  align-self: flex-start;
  margin-top: 5px;
}
.bold {
  font-weight: bold;
}
.italic {
  font-family: "Liberation Serif", serif;
  font-style: italic;
  font-weight: bold;
  font-size: 18px;
}
.under {
  text-decoration: underline;
}
.strike {
  font-size: 12px;
  text-decoration: line-through;
}
.tool sub,
.tool sup {
  font-size: 9px;
  color: #4a7ab5;
}
.tool sub {
  align-self: flex-end;
}
.tool sup {
  align-self: flex-start;
}
.effect span {
  font-size: 20px;
  line-height: 24px;
  color: #fff;
  -webkit-text-stroke: 1px #4a7ab5;
  text-shadow: 0 0 3px #8db4e2;
}
.fontcolor span {
  width: 20px;
  height: 22px;
  line-height: 16px;
  font-weight: bold;
  border-bottom: 5px solid #ee2b20;
}
.ab {
  font-size: 11px;
  font-weight: bold;
  fill: #666;
}
.num {
  font-size: 7px;
  font-weight: bold;
  fill: #4a7ab5;
}
.pil {
  gap: 1px;
}
.pil.large {
  font-size: 20px;
}
.sa,
.sz {
  font-size: 11px;
  font-weight: bold;
  fill: #4a7ab5;
}
.sz {
  fill: #777;
}
.ra {
  font-size: 11px;
  fill: #555;
}

/* styles gallery */
.gallery {
  display: flex;
  flex: 1;
  min-width: 0;
  height: 75px;
  margin: 7px 13px 0 11px;
  background: #fff;
  border: 1px solid #d2d2d2;
}
.items {
  flex: 1;
  display: flex;
  min-width: 0;
  padding: 1px 0;
  overflow: hidden;
}
.style {
  flex: 0 0 90px;
  flex-direction: column;
  justify-content: flex-start;
  padding: 4px;
  height: 70px;
  border: 1px solid transparent;
}
.style.selected {
  border: 5px solid #c6c6c6;
  padding: 0;
}
.preview {
  display: flex;
  justify-content: flex-end;
  align-items: center;
  width: 66px;
  height: 40px;
  margin-right: 8px;
  overflow: hidden;
  white-space: nowrap;
  color: #000;
}
.caption {
  line-height: 20px;
  color: #666;
}
.h1,
.h2,
.big-title {
  font-family: "Liberation Serif", serif;
  color: #2e74b5;
  font-size: 27px;
}
.h2 {
  font-size: 23px;
}
.big-title {
  width: 76px;
  margin-right: 0;
  color: #000;
  font-size: 48px;
  line-height: 36px;
}
.subtitle {
  color: #5a5a5a;
  letter-spacing: 1px;
}
.subtle {
  color: #404040;
  font-style: italic;
}
.emphasis {
  font-style: italic;
}
.scroll {
  display: flex;
  flex-direction: column;
  width: 18px;
}
.scroll button {
  flex: 1;
  border-left: 1px solid #d2d2d2;
  border-bottom: 1px solid #d2d2d2;
}
.scroll button:last-child {
  border-bottom: none;
}
.scroll .off {
  background: #e8e8e8;
}

/* document */
.workspace {
  flex: 1;
  min-height: 0;
  overflow: hidden;
  display: flex;
  justify-content: center;
  align-items: flex-start;
  padding-right: 22px;
}
.page {
  flex: 0 1 992px;
  background: #fff;
  border: solid #c8c8c8;
  border-width: 0 1px;
  padding: 0 39px;
  font-family: "DejaVu Sans", sans-serif;
  color: #000;
}
.frame {
  border: solid #000;
  border-width: 0 1px;
  padding: 41px 10px 40px 8px;
}
.intro {
  margin: 0 34px 224px 0;
  font-size: 14px;
  line-height: 24px;
  white-space: nowrap;
}
.table-wrap {
  position: relative;
}
.move {
  position: absolute;
  top: -19px;
  right: -20px;
  width: 19px;
  height: 19px;
  background: #fff;
  border: 1px solid #999;
}
table {
  width: 100%;
  table-layout: fixed;
  border-collapse: collapse;
  font-size: 14px;
  line-height: 21px;
}
.c-code {
  width: 140px;
}
.c-mark {
  width: 94px;
}
.c-mark3 {
  width: 106px;
}
th,
td {
  border: 1px solid #000;
  padding: 0 8px;
  vertical-align: top;
  white-space: nowrap;
}
th {
  background: #a6a6a6;
  padding: 0;
  font-size: 12px;
}
.main td:nth-child(-n+2) {
  background: #f2f2f2;
}
.main td:nth-child(2) {
  font-size: 12px;
  font-weight: bold;
}
.indent {
  padding-right: 60px;
}
.loose {
  height: 66px;
  line-height: 22px;
}
.loose.short {
  height: 41px;
}

/* status bar */
.statusbar {
  flex: none;
  display: flex;
  align-items: center;
  height: 27px;
  padding: 0 11px 0 9px;
  font-size: 13px;
  background: #f3f3f3;
  border-top: 1px solid #c8c8c8;
}
.statusbar span + span {
  margin-left: 25px;
}
.proof {
  margin: 0 20px 0 58px;
}
.views {
  display: flex;
  align-self: stretch;
  margin-left: auto;
}
.views button {
  width: 50px;
}
.views .on {
  background: #c6c6c6;
}
.zoom-btn {
  margin-left: 6px;
}
.zoom {
  appearance: none;
  width: 125px;
  height: 14px;
  margin: 0 0 0 6px;
  background: linear-gradient(#aaa, #aaa) center / 100% 1px no-repeat;
}
.zoom::-webkit-slider-thumb {
  appearance: none;
  width: 6px;
  height: 14px;
  background: #666;
}
.percent {
  margin-left: 15px;
  font-size: 12px;
}

/* taskbar */
.taskbar {
  flex: none;
  display: flex;
  height: 50px;
  background: #1d1d1d;
  color: #fff;
}
.app {
  width: 62px;
  position: relative;
}
.app.start {
  width: 60px;
}
.app.open::after {
  content: "";
  position: absolute;
  left: 6px;
  right: 5px;
  bottom: 0;
  height: 3px;
  background: #76b9ed;
}
.app.current {
  background: linear-gradient(to right, #484848 57px, #333 57px);
}
.app.current::after {
  left: 0;
  right: 0;
}
.m365 {
  font-size: 7px;
  font-weight: bold;
  fill: #fff;
}
.w {
  font-size: 11px;
  font-weight: bold;
  fill: #fff;
}
.tray {
  display: flex;
  align-items: center;
  margin-left: auto;
}
.tray button {
  width: 28px;
  height: 50px;
}
.tray .wide {
  width: 31px;
}
.tray .news {
  width: 30px;
  margin-right: 26px;
}
.tray .more {
  margin-right: 4px;
}
.tray .lang {
  font-size: 16px;
  margin-left: 6px;
}
.clock {
  width: 106px;
  display: flex;
  flex-direction: column;
  align-items: center;
  line-height: 23px;
  font-size: 14px;
}
.tray .notify {
  position: relative;
  width: 45px;
  justify-content: flex-start;
  margin-left: 4px;
}
.badge {
  position: absolute;
  left: 9px;
  top: 25px;
  width: 20px;
  height: 20px;
  line-height: 18px;
  border: 1px solid #999;
  border-radius: 50%;
  background: #333;
  font-size: 12px;
  font-weight: bold;
}
.edge {
  width: 1px;
  height: 50px;
  margin-right: 5px;
  background: #777;
}

.watermark {
  position: absolute;
  left: 0;
  right: 0;
  bottom: 14px;
  text-align: center;
  font-family: "DejaVu Sans", sans-serif;
  font-weight: bold;
  font-size: 62px;
  line-height: 64px;
  color: rgba(193, 193, 193, 0.41);
  pointer-events: none;
}
```
